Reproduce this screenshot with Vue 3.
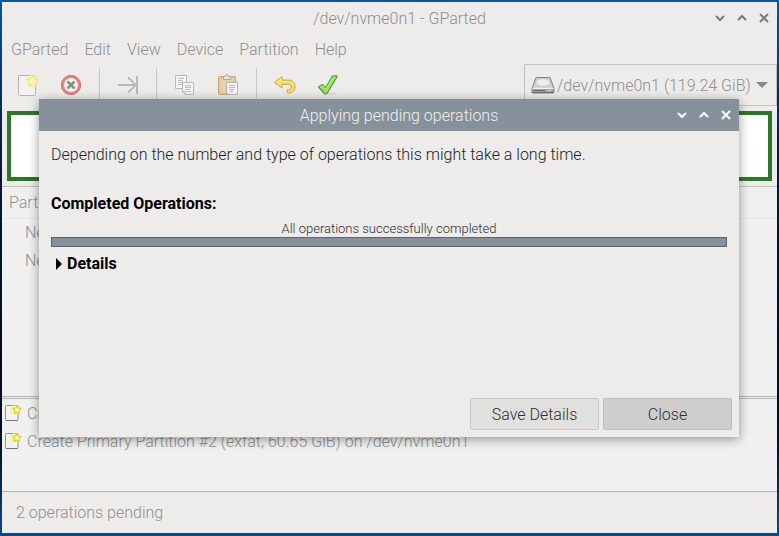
<template>
  <div class="desktop">
    <main class="window">
      <header class="titlebar">
        <h1 class="title">/dev/nvme0n1 - GParted</h1>
        <div class="controls">
          <button v-for="c in controls" :key="c.label" type="button" :aria-label="c.label">
            <svg width="10" height="10" viewBox="0 0 10 10"><path :d="c.path" /></svg>
          </button>
        </div>
      </header>

      <nav class="menubar">
        <button v-for="item in menus" :key="item" type="button">{{ item }}</button>
      </nav>

      <div class="toolbar">
        <button type="button" aria-label="New">
          <svg width="24" height="24" viewBox="0 0 24 24">
            <path d="M2.500 3.500q0-1 1-1h15q1 0 1 1v18q0 1-1 1h-15q-1 0-1-1z" fill="#f2f2f0" stroke="#b4b4b4" />
            <circle cx="16.500" cy="8" r="6.500" fill="#f8f2a8" opacity=".6" />
            <path d="M16.500 2.500l1.900 3.400 3.800.7-2.600 2.800.5 3.800-3.600-1.600-3.500 1.600.5-3.800-2.600-2.800 3.700-.7z" fill="#fbf6b4" stroke="#ebe07c" />
          </svg>
        </button>
        <button type="button" aria-label="Delete">
          <svg width="24" height="24" viewBox="0 0 24 24">
            <circle cx="12" cy="12" r="8.500" fill="#f4f1f0" stroke="#e58585" stroke-width="3" />
            <circle cx="12" cy="12" r="9.600" fill="none" stroke="#d97474" />
            <path d="M8.500 8.500l7 7M15.500 8.500l-7 7" stroke="#8c8c8c" stroke-width="2.600" />
          </svg>
        </button>
        <span class="separator"></span>
        <button type="button" aria-label="Resize/Move">
          <svg width="24" height="24" viewBox="0 0 24 24">
            <path d="M2 12h18M12 4.500l8 7.500-8 7.500" fill="none" stroke="#b8b8b8" stroke-width="1.800" />
            <path d="M21 3v18" stroke="#b8b8b8" stroke-width="2" />
          </svg>
        </button>
        <span class="separator"></span>
        <button type="button" aria-label="Copy">
          <svg width="24" height="24" viewBox="0 0 24 24">
            <path d="M2.500 2.500h11v13h-11z" fill="#f5f5f4" stroke="#b9b9b9" />
            <path d="M5 5.500h6M5 7.500h5M5 9.500h6M5 11.500h4" stroke="#bcbcbc" />
            <path d="M9.500 9.500h11v12h-8l-3-3z" fill="#f5f5f4" stroke="#b9b9b9" />
            <path d="M12 12.500h6M12 14.500h6M12 16.500h5M14 18.500h4M9.500 18.500h3v3" fill="none" stroke="#bcbcbc" />
          </svg>
        </button>
        <button type="button" aria-label="Paste">
          <svg width="24" height="24" viewBox="0 0 24 24">
            <rect x="2.500" y="3.500" width="17" height="18" rx="1" fill="#e6c79a" stroke="#c7a676" />
            <path d="M4.500 6h13v13h-13z" fill="#e9d0ac" />
            <path d="M7.500 6.500v-2q0-1 1-1h1q0-2 1.500-2t1.500 2h1q1 0 1 1v2z" fill="#e4e4e2" stroke="#a9a9a9" />
            <path d="M10.500 9.500h11v12h-9l-2-2z" fill="#f3f3f2" stroke="#b5b5b5" />
            <path d="M13 12.500h6M13 14.500h6M13 16.500h5M14 18.500h3" stroke="#bcbcbc" />
          </svg>
        </button>
        <span class="separator"></span>
        <button type="button" aria-label="Undo">
          <svg width="24" height="24" viewBox="0 0 24 24">
            <path d="M1.500 9.500L9 3.500v3.600h6.500c4 0 6.500 3 6.500 6.600 0 3.800-2.800 6.300-6 6.300-1.500 0-2-.5-2-1.500v-1.700c3 .3 4.300-1 4.300-2.800 0-2-1.400-2.800-3.300-2.800H9v3.800z" fill="#f8e060" stroke="#cfa43d" stroke-linejoin="round" />
            <path d="M4 9.200l4-3v2.400h7.500c2.800 0 4.700 1.500 5 3.800" fill="none" stroke="#fcf0a4" />
          </svg>
        </button>
        <button type="button" aria-label="Apply">
          <svg width="24" height="24" viewBox="0 0 24 24">
            <ellipse cx="13" cy="20.500" rx="8" ry="1.500" fill="#dededc" />
            <path d="M2.500 14l4-2.500 3 3.500L16.500 3l4-.5.500 1.500-10 16.500-2 .5z" fill="#93e558" stroke="#579b45" stroke-width="1.200" stroke-linejoin="round" />
            <path d="M4.500 14l2-1.200 3.300 3.700L17.300 4.500" fill="none" stroke="#c0f29c" />
          </svg>
        </button>
        <label class="device">
          <svg width="24" height="24" viewBox="0 0 24 24">
            <path d="M5 4.500h14l4 11v3.500q0 1-1 1H2q-1 0-1-1v-3.500z" fill="#a4a4a2" stroke="#858585" />
            <path d="M5.500 5h13l3.500 10H2z" fill="#d6d6d4" />
            <ellipse cx="12" cy="9.500" rx="7" ry="4" fill="#ececea" stroke="#c4c4c2" />
            <path d="M1.500 15.500h21" stroke="#f0f0f0" />
            <path d="M3 17.500h11M1 19.500h22" stroke="#6a6a6a" />
            <path d="M17 17.500h3" stroke="#ddd" />
          </svg>
          <select v-model="device" aria-label="Device">
            <option>/dev/nvme0n1 (119.24 GiB)</option>
          </select>
          <svg class="arrow" width="12" height="6" viewBox="0 0 12 6"><path d="M0 0h12L6 6z" fill="#888" /></svg>
        </label>
      </div>

      <div class="disk"></div>

      <section class="partitions">
        <table>
          <thead>
            <tr><th>Partition</th></tr>
          </thead>
          <tbody>
            <tr v-for="name in partitions" :key="name"><td>{{ name }}</td></tr>
          </tbody>
        </table>
      </section>

      <ul class="operations">
        <li v-for="op in operations" :key="op">
          <svg width="18" height="18" viewBox="0 0 18 18">
            <path d="M.5 2.500q0-1 1-1h10.500q1 0 1 1v13q0 1-1 1H1.500q-1 0-1-1z" fill="#f2f2f1" stroke="#929292" />
            <path d="M1 16.500h11.500" stroke="#727272" />
            <circle cx="10" cy="6" r="5" fill="#f3ec9c" opacity=".6" />
            <path d="M12 1.800l1.200 2.300 2.800.4-1.900 2 .4 2.800-2.500-1.200-2.500 1.200.4-2.800-1.900-2 2.700-.4z" fill="#fffde4" stroke="#e0d526" stroke-width="1.300" stroke-linejoin="round" />
          </svg>
          <span>{{ op }}</span>
        </li>
      </ul>

      <footer class="statusbar">{{ operations.length }} operations pending</footer>
    </main>

    <section class="dialog" role="dialog" aria-labelledby="dialog-title">
      <header class="titlebar">
        <h2 id="dialog-title" class="title">Applying pending operations</h2>
        <div class="controls">
          <button v-for="c in controls" :key="c.label" type="button" :aria-label="c.label">
            <svg width="10" height="10" viewBox="0 0 10 10"><path :d="c.path" /></svg>
          </button>
        </div>
      </header>
      <div class="body">
        <p>Depending on the number and type of operations this might take a long time.</p>
        <h3>Completed Operations:</h3>
        <label class="status" for="apply-progress">All operations successfully completed</label>
        <progress id="apply-progress" :value="progress" max="100"></progress>
        <details>
          <summary>
            <svg width="6" height="12" viewBox="0 0 6 12"><path d="M0 0l6 6-6 6z" /></svg>
            Details
          </summary>
        </details>
      </div>
      <div class="actions">
        <button type="button">Save Details</button>
        <button type="button" class="focused">Close</button>
      </div>
    </section>
  </div>
</template>

<script setup>
import { ref } from 'vue'

const controls = [
  { label: 'Minimize', path: 'M1 3l4 4 4-4' },
  { label: 'Maximize', path: 'M1 7l4-4 4 4' },
  { label: 'Close', path: 'M1 1l8 8M9 1L1 9' }
]

const menus = ['GParted', 'Edit', 'View', 'Device', 'Partition', 'Help']
const partitions = ['New Partition #1', 'New Partition #2']
const operations = [
  'Create Primary Partition #1',
  'Create Primary Partition #2 (exfat, 60.65 GiB) on /dev/nvme0n1'
]

const device = ref('/dev/nvme0n1 (119.24 GiB)')
const progress = ref(100)
</script>

<style>
body {
  margin: 0;
}
</style>

<style scoped>
.desktop {
  position: relative;
  box-sizing: border-box;
  display: flex;
  min-height: 100vh;
  padding: 2px 2px 3px;
  background: linear-gradient(to bottom, #0358a6 0, #034a8c 30px, #021c40 150px, #020c20 360px, #03101f 440px, #064a8a 536px);
  font-family: Roboto, "Liberation Sans", sans-serif;
  font-size: 16px;
  font-weight: 300;
  line-height: 20px;
}

.desktop * {
  box-sizing: border-box;
}

button,
select {
  margin: 0;
  padding: 0;
  border: 0;
  background: none;
  color: inherit;
  font: inherit;
}

h1,
h2,
h3,
p,
ul {
  margin: 0;
  padding: 0;
  font-size: 16px;
  font-weight: 300;
}

.window {
  flex: 1;
  display: flex;
  flex-direction: column;
  min-width: 0;
  background: #edecea;
  color: #8e8f8f;
}

.titlebar {
  display: flex;
  align-items: center;
  height: 32px;
  padding: 0 2px 0 88px;
}

.title {
  flex: 1;
  padding-top: 2px;
  text-align: center;
}

.controls {
  display: flex;
}

.controls button {
  display: flex;
  align-items: center;
  justify-content: center;
  width: 22px;
  height: 22px;
}

.controls path {
  fill: none;
  stroke: #7b7b7b;
  stroke-width: 2;
}

.menubar {
  display: flex;
  gap: 16px;
  padding: 6px 9px 4px;
}

.toolbar {
  display: flex;
  align-items: center;
  height: 42px;
  padding-left: 4px;
}

.toolbar > button {
  display: flex;
  align-items: center;
  justify-content: center;
  width: 43px;
  height: 40px;
}

.separator {
  width: 1px;
  height: 34px;
  margin: 0 6px 0 7px;
  background: #c9c8c6;
}

.device {
  display: flex;
  align-items: center;
  height: 42px;
  margin-left: auto;
  padding: 0 8px 0 6px;
  border: 1px solid #c3c2c0;
}

.device select {
  appearance: none;
  margin: 0 5px 0 2px;
  padding-top: 2px;
}

.disk {
  height: 70px;
  margin: 5px;
  border: 4px solid #2b782b;
  background: #fff;
}

.partitions {
  flex: 1;
  border-top: 1px solid #c2c1bf;
  border-bottom: 1px solid #b5b5b4;
  background: #f0f0f0;
}

.partitions table {
  width: 100%;
  border-collapse: collapse;
}

.partitions th {
  height: 31px;
  padding: 2px 7px 0;
  border-bottom: 1px solid #e6e6e5;
  font-weight: 300;
  text-align: left;
}

.partitions td {
  height: 28px;
  padding: 2px 23px 0;
}

.operations {
  height: 94px;
  margin-top: 1px;
  border: solid #b5b5b4;
  border-width: 1px 0;
  background: #f0f0f0;
  list-style: none;
}

.operations li {
  display: flex;
  align-items: center;
  gap: 4px;
  height: 28px;
  padding-left: 3px;
}

.operations span {
  padding-top: 2px;
}

.statusbar {
  padding: 11px 14px 10px;
}

.dialog {
  position: absolute;
  top: 99px;
  left: 39px;
  right: 40px;
  background: #edecea;
  box-shadow: 0 2px 10px rgba(0, 0, 0, 0.4);
  color: #2c2f30;
}

.dialog .titlebar {
  background: #87919b;
  color: #eef0f2;
}

.dialog .controls path {
  stroke: #fff;
}

.body {
  display: flex;
  flex-direction: column;
  min-height: 267px;
  padding: 14px 12px 0;
}

.body p {
  color: #1c1e1f;
}

.body h3 {
  margin-top: 29px;
  color: #000;
  font-weight: 700;
}

.status {
  margin-top: 7px;
  font-size: 13px;
  line-height: 16px;
  text-align: center;
}

progress {
  appearance: none;
  display: block;
  width: 100%;
  height: 10px;
  border: 1px solid #5c646b;
  background: #d5d4d2;
}

progress::-webkit-progress-bar {
  background: #d5d4d2;
}

progress::-webkit-progress-value {
  background: #87919b;
}

summary {
  display: flex;
  align-items: center;
  gap: 5px;
  padding: 7px 5px;
  color: #000;
  font-weight: 700;
  list-style: none;
}

.actions {
  display: flex;
  justify-content: flex-end;
  gap: 4px;
  padding: 0 7px 7px;
}

.actions button {
  width: 129px;
  height: 32px;
  padding-top: 2px;
  border: 1px solid #c8c7c5;
  border-radius: 2px;
  background: #e1e0de;
}

.actions .focused {
  border-color: #bfbebc;
  background: #cfcecc;
}
</style>
